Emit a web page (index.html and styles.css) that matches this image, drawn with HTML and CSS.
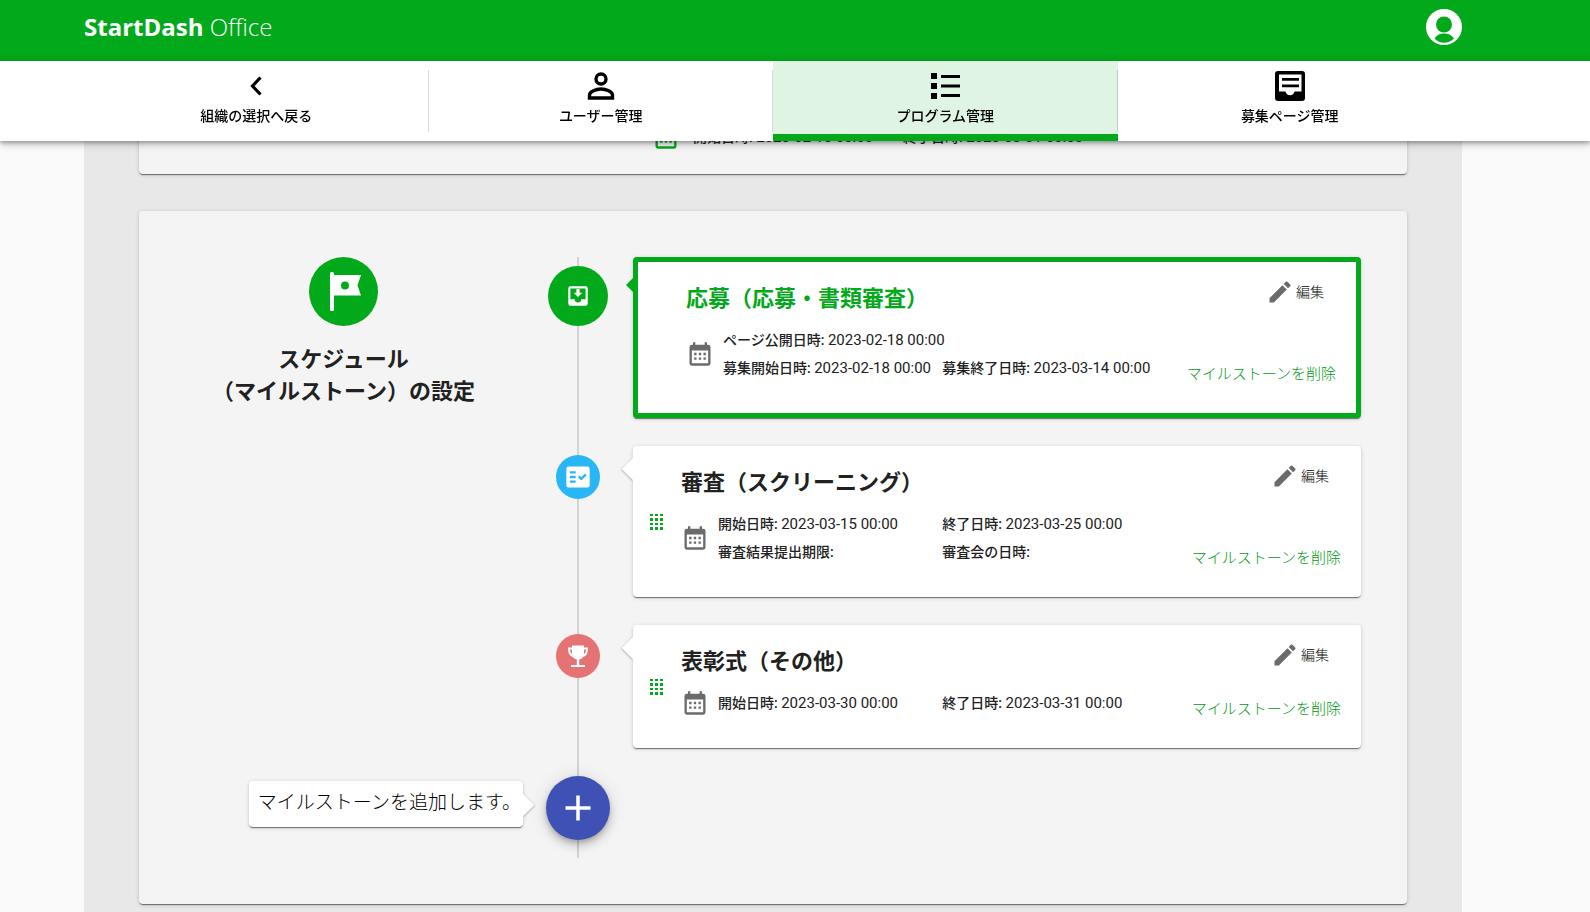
FILE: index.html
```html
<!DOCTYPE html>
<html lang="ja">
<head>
<meta charset="utf-8">
<title>StartDash Office</title>
<meta name="viewport" content="width=device-width, initial-scale=1">
<link rel="stylesheet" href="styles.css">
</head>
<body>
<svg class="sprite" aria-hidden="true">
  <symbol id="calendar" viewBox="0 0 24 24"><path d="M19 4h-1V2h-2v2H8V2H6v2H5a2 2 0 0 0-2 2v14a2 2 0 0 0 2 2h14a2 2 0 0 0 2-2V6a2 2 0 0 0-2-2zm0 16H5V9h14zM7 11h2v2H7zm4 0h2v2h-2zm4 0h2v2h-2zM7 15h2v2H7zm4 0h2v2h-2zm4 0h2v2h-2z"/></symbol>
  <symbol id="pencil" viewBox="0 0 24 24"><path d="M3 17.25V21h3.75L17.81 9.94l-3.75-3.75zM20.71 7.04a1 1 0 0 0 0-1.41l-2.34-2.34a1 1 0 0 0-1.41 0l-1.83 1.83 3.75 3.75z"/></symbol>
  <symbol id="grip" viewBox="0 0 13 16"><path d="M0 0h3v2H0zM5 0h3v2H5zM10 0h3v2h-3zM0 4h3v3H0zM5 4h3v3H5zM10 4h3v3h-3zM0 9h3v2H0zM5 9h3v2H5zM10 9h3v2h-3zM0 13h3v3H0zM5 13h3v3H5zM10 13h3v3h-3z"/></symbol>
</svg>

<header class="top">
  <div class="bar">
    <a class="logo" href="#"><b>StartDash</b> Office</a>
    <button class="account" type="button" aria-label="アカウント">
      <svg viewBox="0 0 36 36"><circle cx="18" cy="18" r="18" fill="#fff"/><circle cx="18" cy="15.500" r="8" fill="#02a91a"/><path d="M8.500 29.500C11 25.500 14.500 24.500 18 24.500s7.500 1 10 5C25 32.500 21.500 33.800 18 33.800s-6.500-1.300-9.500-4.300z" fill="#02a91a"/></svg>
    </button>
  </div>
  <nav class="tabs">
    <a class="tab" href="#"><svg viewBox="0 0 32 32"><path d="M20.500 7.500 12.500 16l8 8.500" fill="none" stroke="#000" stroke-width="3.200"/></svg><span>組織の選択へ戻る</span></a>
    <a class="tab" href="#"><svg viewBox="0 0 32 32"><g fill="none" stroke="#000" stroke-width="3.400"><circle cx="16" cy="9" r="5"/><path d="M4.500 28v-3c0-3.500 6.500-6 11.500-6s11.500 2.500 11.500 6v3z"/></g></svg><span>ユーザー管理</span></a>
    <a class="tab active" href="#" aria-current="page"><svg viewBox="0 0 32 32"><path d="M2 3h6v6H2zM2 13h6v6H2zM2 23h6v6H2zM12 5h19v3H12zM12 14.500h19v3H12zM12 24h19v3H12z"/></svg><span>プログラム管理</span></a>
    <a class="tab" href="#"><svg viewBox="0 0 32 32"><path fill-rule="evenodd" d="M4 1h24a3 3 0 0 1 3 3v24a3 3 0 0 1-3 3H4a3 3 0 0 1-3-3V4a3 3 0 0 1 3-3zM5 4.500V21.500h6.500a4.600 4.600 0 0 0 9 0H27.500V4.500zM8 8h17v2.800H8zM8 14.500h17v2.800H8z"/></svg><span>募集ページ管理</span></a>
  </nav>
</header>

<main class="page">
  <section class="panel period">
    <svg class="ico" aria-hidden="true"><use href="#calendar"/></svg>
    <p><span class="label">開始日時:</span> <time>2023-02-16 00:00</time></p>
    <p><span class="label">終了日時:</span> <time>2023-03-31 00:00</time></p>
  </section>

  <section class="panel schedule">
    <div class="intro">
      <svg class="flag" viewBox="0 0 69 69" aria-hidden="true"><circle cx="34.500" cy="34.500" r="34.500" fill="#02a91a"/><path fill="#fff" fill-rule="evenodd" d="M21 16.500a1.500 1.500 0 0 1 1.500-1.500h1a1.500 1.500 0 0 1 1.500 1.500V18h27l-3.500 10.300L52 38.500H25v14a1.500 1.500 0 0 1-1.500 1.500h-1a1.500 1.500 0 0 1-1.500-1.500zM36 24.500a4 4 0 1 0 0 8 4 4 0 0 0 0-8z"/></svg>
      <h2>スケジュール<br>（マイルストーン）の設定</h2>
    </div>

    <div class="timeline">
      <div class="step">
        <div class="axis"><span class="marker large"><svg viewBox="0 0 24 24"><path d="M16 9h-2.500V5.500h-3V9H8l4 4zm3-6H5a2 2 0 0 0-2 2v14a2 2 0 0 0 2 2h14a2 2 0 0 0 2-2V5a2 2 0 0 0-2-2zm0 12h-4a3 3 0 0 1-6 0H5V5h14z"/></svg></span></div>
        <article class="milestone current">
          <div class="detail">
            <h3>応募（応募・書類審査）</h3>
            <div class="when">
              <svg class="ico" aria-hidden="true"><use href="#calendar"/></svg>
              <div class="dates">
                <p class="wide"><span class="label">ページ公開日時:</span> <time>2023-02-18 00:00</time></p>
                <p><span class="label">募集開始日時:</span> <time>2023-02-18 00:00</time></p>
                <p><span class="label">募集終了日時:</span> <time>2023-03-14 00:00</time></p>
              </div>
            </div>
          </div>
          <div class="actions">
            <button class="edit" type="button"><svg class="ico" aria-hidden="true"><use href="#pencil"/></svg>編集</button>
            <button class="delete" type="button">マイルストーンを削除</button>
          </div>
        </article>
      </div>

      <div class="step">
        <div class="axis"><span class="marker blue"><svg viewBox="0 0 24 24"><path fill-rule="evenodd" d="M20 3H4a2 2 0 0 0-2 2v14a2 2 0 0 0 2 2h16a2 2 0 0 0 2-2V5a2 2 0 0 0-2-2zM10 17H5v-2h5zm0-4H5v-2h5zm0-4H5V7h5zm4.820 6L12 12.160l1.410-1.410 1.410 1.420L17.990 9l1.420 1.420z"/></svg></span></div>
        <article class="milestone">
          <svg class="grip" aria-hidden="true"><use href="#grip"/></svg>
          <div class="detail">
            <h3>審査（スクリーニング）</h3>
            <div class="when">
              <svg class="ico" aria-hidden="true"><use href="#calendar"/></svg>
              <div class="dates">
                <p><span class="label">開始日時:</span> <time>2023-03-15 00:00</time></p>
                <p><span class="label">終了日時:</span> <time>2023-03-25 00:00</time></p>
                <p><span class="label">審査結果提出期限:</span></p>
                <p><span class="label">審査会の日時:</span></p>
              </div>
            </div>
          </div>
          <div class="actions">
            <button class="edit" type="button"><svg class="ico" aria-hidden="true"><use href="#pencil"/></svg>編集</button>
            <button class="delete" type="button">マイルストーンを削除</button>
          </div>
        </article>
      </div>

      <div class="step">
        <div class="axis"><span class="marker red"><svg viewBox="0 0 28 28"><path d="M8 3.500h12v8a6 6 0 0 1-4.800 5.900V23H21v2H7v-2h5.800v-5.600A6 6 0 0 1 8 11.500z"/><path d="M8.500 6.500H5c0 4.500 1 7 5 7.700M19.500 6.500H23c0 4.500-1 7-5 7.700" fill="none" stroke="#fff" stroke-width="2"/></svg></span></div>
        <article class="milestone">
          <svg class="grip" aria-hidden="true"><use href="#grip"/></svg>
          <div class="detail">
            <h3>表彰式（その他）</h3>
            <div class="when">
              <svg class="ico" aria-hidden="true"><use href="#calendar"/></svg>
              <div class="dates">
                <p><span class="label">開始日時:</span> <time>2023-03-30 00:00</time></p>
                <p><span class="label">終了日時:</span> <time>2023-03-31 00:00</time></p>
              </div>
            </div>
          </div>
          <div class="actions">
            <button class="edit" type="button"><svg class="ico" aria-hidden="true"><use href="#pencil"/></svg>編集</button>
            <button class="delete" type="button">マイルストーンを削除</button>
          </div>
        </article>
      </div>

      <div class="add">
        <button class="fab" type="button" aria-labelledby="add-hint"><svg viewBox="0 0 26 26"><path d="M0.500 13h25M13 0.500v25" stroke="#fff" stroke-width="3.500"/></svg></button>
        <span class="hint" id="add-hint">マイルストーンを追加します。</span>
      </div>
    </div>
  </section>
</main>
</body>
</html>
```
FILE: styles.css
```css
:root {
  --green: #02a91a;
  --raised: 0 2px 1px -1px rgba(0, 0, 0, .35), 0 1px 1px rgba(0, 0, 0, .22), 0 1px 4px rgba(0, 0, 0, .16);
  --side-left: 84px;
  --side-right: 128px;
}
* { box-sizing: border-box; }
body {
  margin: 0;
  background: #fafafa;
  color: #212121;
  font: 14px/28px Roboto, "Noto Sans CJK JP", sans-serif;
}
h2, h3, p { margin: 0; }
h2, h3 { font-size: 22px; line-height: 32px; font-weight: 700; }
button {
  padding: 0;
  border: 0;
  background: none;
  color: inherit;
  font: inherit;
  cursor: pointer;
}
a { color: inherit; text-decoration: none; }
svg { display: block; }
time { font-size: 15px; }
.sprite { position: absolute; width: 0; height: 0; }
.ico { flex: none; width: 28px; height: 28px; fill: #6b6b6b; }

.top {
  position: fixed;
  inset: 0 0 auto;
  z-index: 10;
  background: #fff;
  box-shadow: 0 2px 4px rgba(0, 0, 0, .3), 0 4px 8px rgba(0, 0, 0, .16);
}
.bar {
  display: flex;
  align-items: center;
  justify-content: space-between;
  height: 61px;
  padding: 0 var(--side-right) 8px var(--side-left);
  background: linear-gradient(var(--green) 54px, #029c18);
}
.logo { color: #fff; font: 300 24px/36px "Open Sans", "Noto Sans", sans-serif; }
.logo b { font-weight: 700; }
.account { width: 36px; height: 36px; }

.tabs {
  display: grid;
  grid-template-columns: repeat(4, 1fr);
  padding: 0 var(--side-right) 0 var(--side-left);
}
.tab {
  position: relative;
  display: flex;
  flex-direction: column;
  align-items: center;
  gap: 4px;
  padding: 9px 0 8px;
  border-bottom: 7px solid transparent;
  color: #000;
  font-weight: 500;
  line-height: 20px;
}
.tab svg { width: 32px; height: 32px; }
.tab:not(:last-child)::after {
  content: "";
  position: absolute;
  inset: 9px 0 2px auto;
  width: 1px;
  background: rgba(0, 0, 0, .15);
}
.tab.active { background: #dff4e3; border-color: var(--green); }

.page {
  margin: 0 var(--side-right) 0 var(--side-left);
  padding: 100px 55px 37px;
  background: #e8e8e8;
}
.panel { border-radius: 4px; background: #f4f4f4; box-shadow: var(--raised); }
.period {
  display: flex;
  align-items: center;
  padding: 23px 45px 23px 513px;
  margin-bottom: 37px;
}
.period .ico { fill: var(--green); }
.period p { width: 210px; }
.period .ico + p { margin-left: 13px; }

.schedule {
  display: grid;
  grid-template-columns: 319px 1fr;
  padding: 46px 46px 46px 45px;
}
.intro { display: flex; flex-direction: column; align-items: center; gap: 18px; text-align: center; }
.intro h2 { white-space: nowrap; }
.flag { width: 69px; height: 69px; }

.timeline { position: relative; padding-bottom: 18px; }
.timeline::before {
  content: "";
  position: absolute;
  inset: 0 auto 0 74px;
  width: 2px;
  background: #d3d3d3;
}
.step { position: relative; display: flex; margin-bottom: 28px; }
.axis {
  flex: none;
  display: flex;
  justify-content: center;
  width: 64px;
  margin: 9px 23px 0 43px;
}
.marker {
  display: grid;
  place-items: center;
  width: 44px;
  height: 44px;
  border-radius: 50%;
}
.marker svg { width: 28px; height: 28px; fill: #fff; }
.marker.large { width: 60px; height: 60px; background: var(--green); }
.marker.large svg { width: 26px; height: 26px; }
.blue { background: #29b6f6; }
.red { background: #e57373; }

.milestone {
  position: relative;
  flex: 1;
  display: flex;
  justify-content: space-between;
  gap: 25px;
  padding: 0 20px 0 48px;
  border-radius: 4px;
  background: #fff;
  box-shadow: var(--raised);
}
.milestone::before {
  content: "";
  position: absolute;
  top: 15px;
  left: -8px;
  width: 16px;
  height: 16px;
  background: #fff;
  box-shadow: 0 1px 2px rgba(0, 0, 0, .25);
  clip-path: polygon(0 0, 100% 100%, 100% calc(100% + 4px), -4px calc(100% + 4px), -4px 0);
  transform: rotate(45deg);
}
.milestone.current { border: 5px solid var(--green); }
.milestone.current::before {
  top: 13px;
  left: -12px;
  width: 10px;
  height: 20px;
  background: var(--green);
  box-shadow: none;
  clip-path: polygon(0 50%, 100% 0, 100% 100%);
  transform: none;
}
.current h3 { color: var(--green); }
.grip { position: absolute; top: calc(50% - 8px); left: 17px; width: 13px; height: 16px; fill: var(--green); }
.detail { flex: 1; padding: 21px 0 31px; }
.when { display: flex; align-items: center; gap: 9px; margin-top: 11px; }
.dates { flex: 1; display: grid; grid-template-columns: 1fr 1fr; white-space: nowrap; }
.wide { grid-column: 1 / -1; }
.label { font-weight: 500; }
.actions {
  display: flex;
  flex-direction: column;
  justify-content: space-between;
  align-items: flex-end;
  padding: 16px 0 29px;
  color: #000;
  font-weight: 300;
}
.edit { display: flex; align-items: center; gap: 2px; margin-right: 12px; }
.delete { color: #009a14; font-size: 15px; line-height: 20px; white-space: nowrap; }

.add { position: relative; width: 64px; margin-left: 43px; }
.fab {
  display: grid;
  place-items: center;
  width: 64px;
  height: 64px;
  border-radius: 50%;
  background: #3f51b5;
  box-shadow: 0 3px 5px -1px rgba(0, 0, 0, .2), 0 6px 10px rgba(0, 0, 0, .14), 0 1px 18px rgba(0, 0, 0, .12);
}
.fab svg { width: 26px; height: 26px; }
.hint {
  position: absolute;
  top: 5px;
  right: calc(100% + 23px);
  padding: 8px 2px 10px 9px;
  border-radius: 4px;
  background: #fff;
  box-shadow: var(--raised);
  color: #000;
  font-size: 19px;
  font-weight: 300;
  line-height: 28px;
  white-space: nowrap;
}
.hint::after {
  content: "";
  position: absolute;
  top: 16px;
  right: -8px;
  width: 16px;
  height: 16px;
  background: #fff;
  box-shadow: 1px 0 2px rgba(0, 0, 0, .25);
  clip-path: polygon(0 0, 100% 100%, calc(100% + 4px) 100%, calc(100% + 4px) -4px, 0 -4px);
  transform: rotate(45deg);
}
```
